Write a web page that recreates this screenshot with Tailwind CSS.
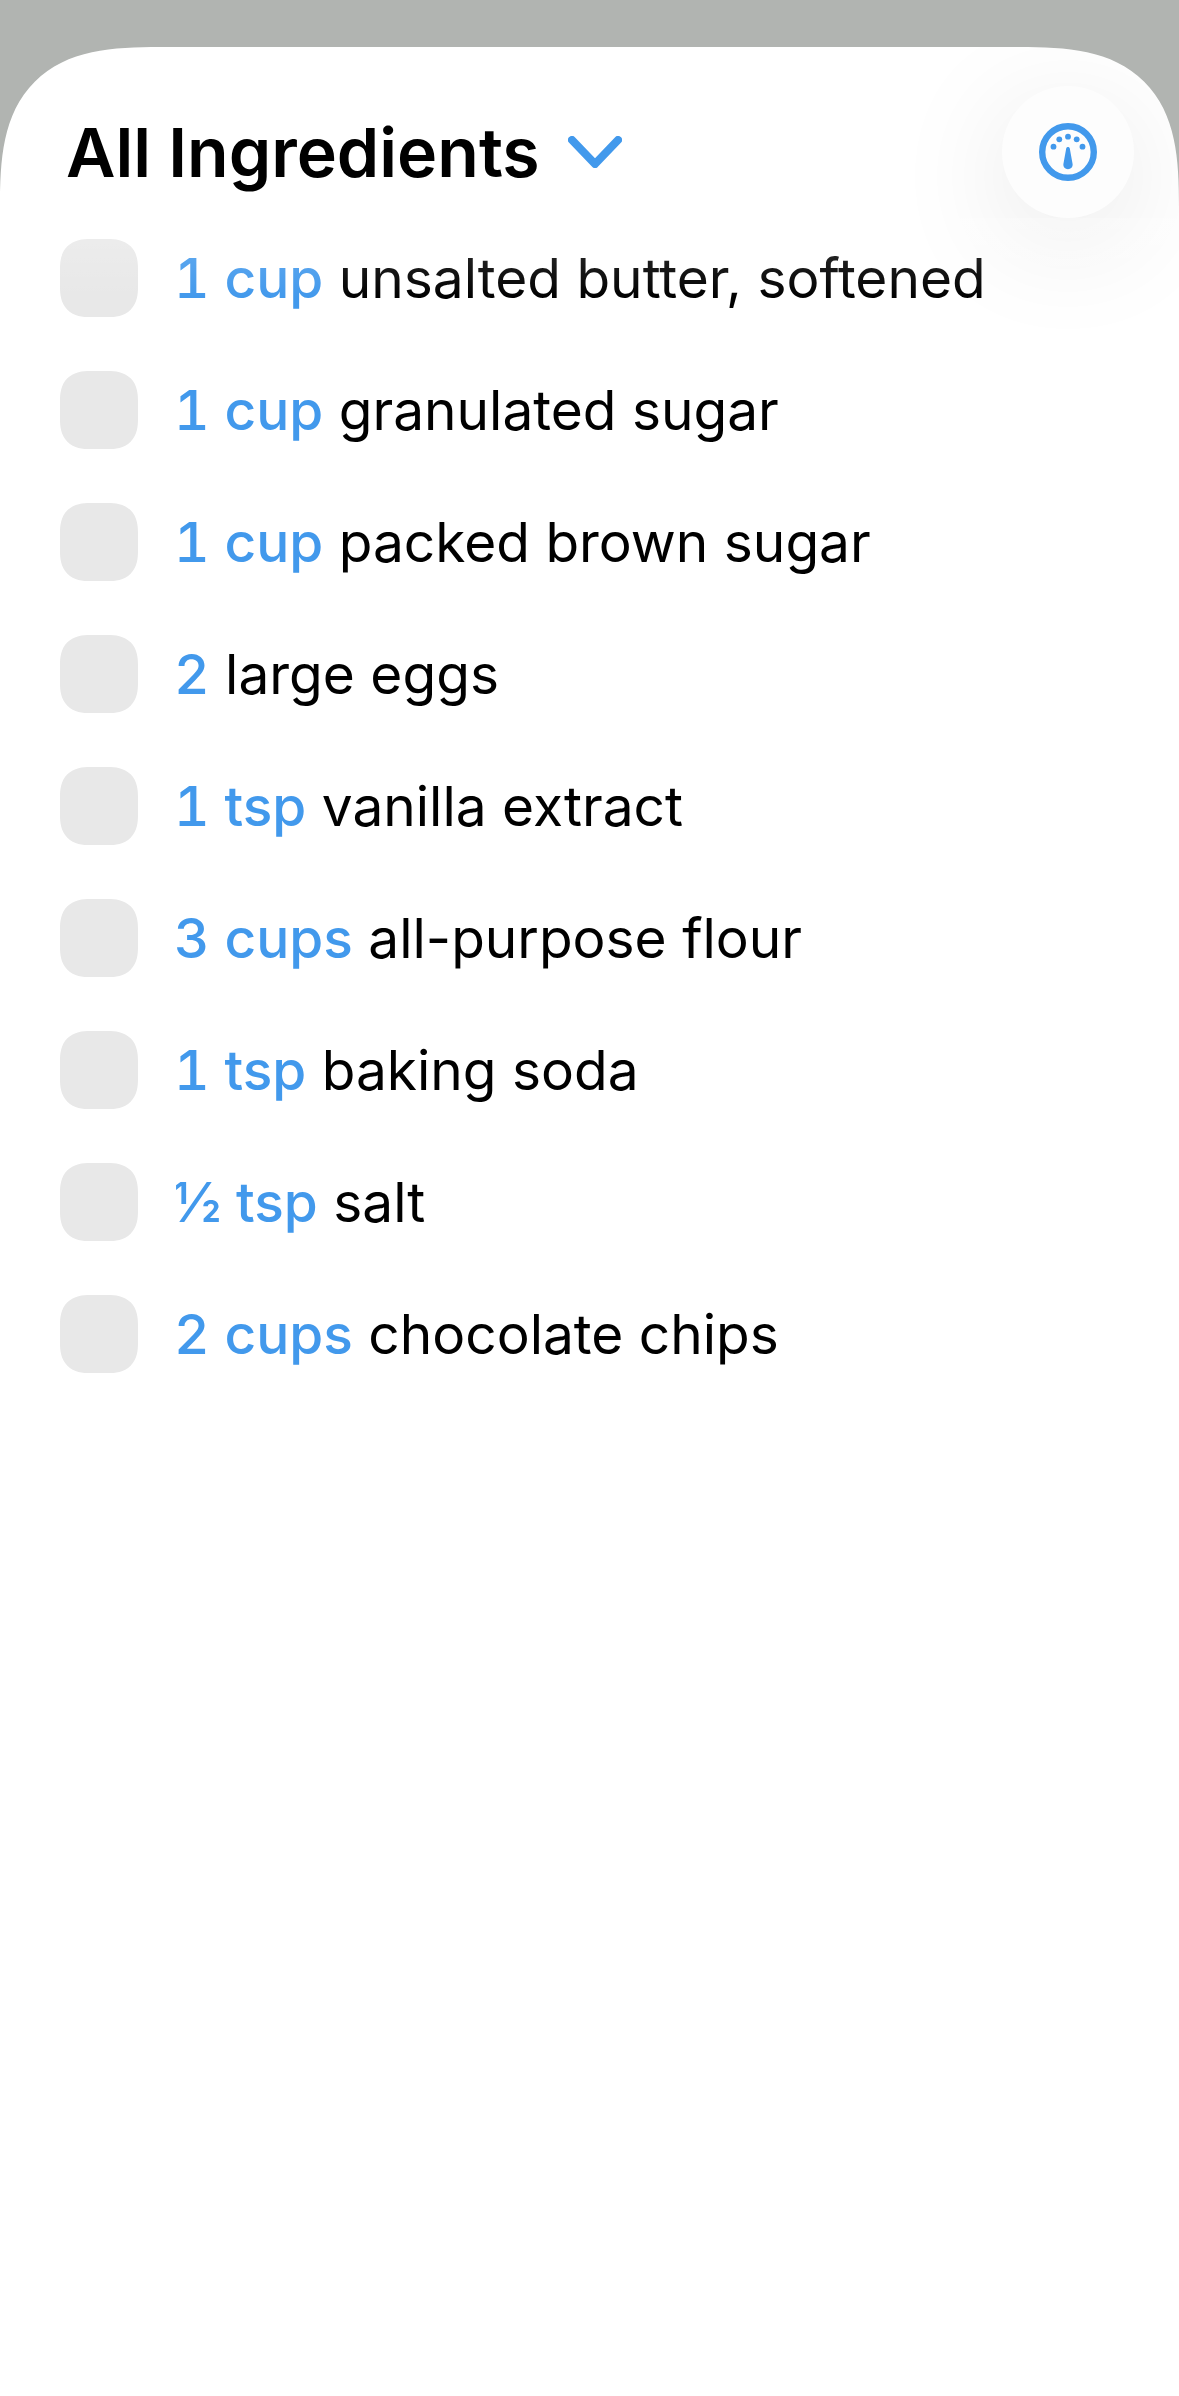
<!DOCTYPE html>
<html lang="en">
  <head>
    <meta charset="UTF-8" />
    <title>All Ingredients</title>
    <meta name="viewport" content="width=device-width, initial-scale=1.0" />
    <script src="https://cdn.jsdelivr.net/npm/@tailwindcss/browser@4"></script>
  </head>

  <body class="bg-[#b1b4b1] font-['Inter','Liberation_Sans',sans-serif] text-black">
    <div class="min-h-screen flex flex-col pt-[47px]">
      <!-- Sheet -->
      <main
        class="grow bg-white overflow-hidden rounded-t-[160px] [corner-shape:superellipse(1.5)]"
      >
        <!-- Header -->
        <header
          class="relative flex items-center justify-between pt-[39px] pl-[66px] pr-[45px]"
        >
          <h1>
            <button
              type="button"
              class="flex items-center gap-7 text-[68px] leading-[80px] font-semibold"
            >
              All Ingredients
              <svg class="w-[54px] h-8" viewBox="0 0 54 32" fill="none" aria-hidden="true">
                <path
                  d="M4 4L27 28L50 4"
                  stroke="#4299ec"
                  stroke-width="8"
                  stroke-linecap="round"
                  stroke-linejoin="round"
                />
              </svg>
            </button>
          </h1>

          <button
            type="button"
            aria-label="Scale recipe"
            class="size-[132px] rounded-full bg-[#fdfdfd] flex items-center justify-center shadow-[0_24px_120px_rgba(0,0,0,0.10)]"
          >
            <svg class="size-[58px]" viewBox="0 0 58 58" fill="#4299ec" aria-hidden="true">
              <circle cx="29" cy="29" r="25.8" fill="none" stroke="#4299ec" stroke-width="6.4" />
              <circle cx="14.5" cy="23.7" r="2.9" />
              <circle cx="20.3" cy="16.3" r="2.9" />
              <circle cx="29" cy="13.7" r="2.9" />
              <circle cx="37.7" cy="16.3" r="2.9" />
              <circle cx="43.5" cy="23.7" r="2.9" />
              <path
                d="M27.2 25.6C27.5 23.6 30.5 23.6 30.8 25.6L33.6 41C34 44 31.8 46.2 29 46.2C26.2 46.2 24 44 24.4 41Z"
              />
            </svg>
          </button>

          <!-- Fade over the top of the list -->
          <div
            class="absolute top-full inset-x-0 h-20 bg-linear-to-b from-white/25 to-white/0 pointer-events-none"
          ></div>
        </header>

        <!-- Ingredients -->
        <ul class="flex flex-col gap-[54px] pt-[21px] px-[60px] pb-16 text-[55px] leading-[78px]">
          <li>
            <label class="flex items-center gap-9">
              <input type="checkbox" class="appearance-none shrink-0 size-[78px] rounded-[30px] [corner-shape:superellipse(1.3)] bg-[#e8e8e8] checked:bg-[#4299ec]" />
              <span><span class="font-medium tabular-nums text-[#4299ec]">1 cup</span> unsalted butter, softened</span>
            </label>
          </li>
          <li>
            <label class="flex items-center gap-9">
              <input type="checkbox" class="appearance-none shrink-0 size-[78px] rounded-[30px] [corner-shape:superellipse(1.3)] bg-[#e8e8e8] checked:bg-[#4299ec]" />
              <span><span class="font-medium tabular-nums text-[#4299ec]">1 cup</span> granulated sugar</span>
            </label>
          </li>
          <li>
            <label class="flex items-center gap-9">
              <input type="checkbox" class="appearance-none shrink-0 size-[78px] rounded-[30px] [corner-shape:superellipse(1.3)] bg-[#e8e8e8] checked:bg-[#4299ec]" />
              <span><span class="font-medium tabular-nums text-[#4299ec]">1 cup</span> packed brown sugar</span>
            </label>
          </li>
          <li>
            <label class="flex items-center gap-9">
              <input type="checkbox" class="appearance-none shrink-0 size-[78px] rounded-[30px] [corner-shape:superellipse(1.3)] bg-[#e8e8e8] checked:bg-[#4299ec]" />
              <span><span class="font-medium tabular-nums text-[#4299ec]">2</span> large eggs</span>
            </label>
          </li>
          <li>
            <label class="flex items-center gap-9">
              <input type="checkbox" class="appearance-none shrink-0 size-[78px] rounded-[30px] [corner-shape:superellipse(1.3)] bg-[#e8e8e8] checked:bg-[#4299ec]" />
              <span><span class="font-medium tabular-nums text-[#4299ec]">1 tsp</span> vanilla extract</span>
            </label>
          </li>
          <li>
            <label class="flex items-center gap-9">
              <input type="checkbox" class="appearance-none shrink-0 size-[78px] rounded-[30px] [corner-shape:superellipse(1.3)] bg-[#e8e8e8] checked:bg-[#4299ec]" />
              <span><span class="font-medium tabular-nums text-[#4299ec]">3 cups</span> all-purpose flour</span>
            </label>
          </li>
          <li>
            <label class="flex items-center gap-9">
              <input type="checkbox" class="appearance-none shrink-0 size-[78px] rounded-[30px] [corner-shape:superellipse(1.3)] bg-[#e8e8e8] checked:bg-[#4299ec]" />
              <span><span class="font-medium tabular-nums text-[#4299ec]">1 tsp</span> baking soda</span>
            </label>
          </li>
          <li>
            <label class="flex items-center gap-9">
              <input type="checkbox" class="appearance-none shrink-0 size-[78px] rounded-[30px] [corner-shape:superellipse(1.3)] bg-[#e8e8e8] checked:bg-[#4299ec]" />
              <span><span class="font-medium tabular-nums text-[#4299ec]">½ tsp</span> salt</span>
            </label>
          </li>
          <li>
            <label class="flex items-center gap-9">
              <input type="checkbox" class="appearance-none shrink-0 size-[78px] rounded-[30px] [corner-shape:superellipse(1.3)] bg-[#e8e8e8] checked:bg-[#4299ec]" />
              <span><span class="font-medium tabular-nums text-[#4299ec]">2 cups</span> chocolate chips</span>
            </label>
          </li>
        </ul>
      </main>
    </div>
  </body>
</html>
